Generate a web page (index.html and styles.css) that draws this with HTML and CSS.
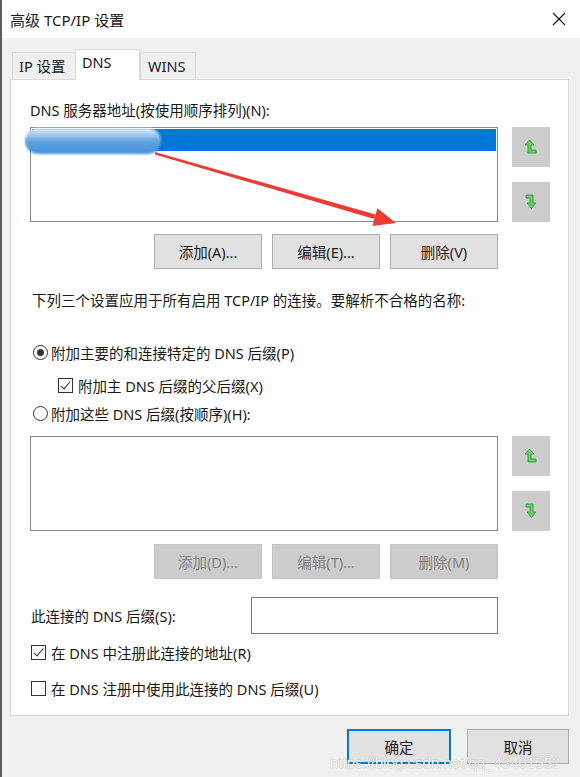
FILE: index.html
```html
<!DOCTYPE html>
<html lang="zh-CN">
<head>
  <meta charset="UTF-8" />
  <title>高级 TCP/IP 设置</title>
  <link rel="stylesheet" href="styles.css">
</head>
<body>
  <div class="window">
    <div class="titlebar">
      <span class="title">高级 TCP/IP 设置</span>
      <svg class="close" width="14" height="14" viewBox="0 0 14 14">
        <path d="M1 1 L13 13 M13 1 L1 13" stroke="#111" stroke-width="1.1" fill="none"/>
      </svg>
    </div>

    <div class="content">
      <div class="tabs">
        <div class="tab">IP 设置</div>
        <div class="tab active">DNS</div>
        <div class="tab">WINS</div>
      </div>

      <div class="panel">
        <div class="label first">DNS 服务器地址(按使用顺序排列)(N):</div>
        <div class="list-row">
          <div class="listbox">
            <div class="selected"></div>
            <div class="mosaic"></div>
          </div>
          <div class="side-btns">
            <div class="side-btn">
              <svg width="12" height="16" viewBox="0 0 12 16"><polygon points="4.5,1 9,6 6,6 6,11 11,11 11,14 3,14 3,6 0,6" fill="#5fd35f" stroke="#2f9a3a" stroke-width="0.8"/></svg>
            </div>
            <div class="side-btn">
              <svg width="12" height="16" viewBox="0 0 12 16"><polygon points="1,1 8,1 8,9 11,9 6.5,14.5 2,9 5,9 5,4 1,4" fill="#5fd35f" stroke="#2f9a3a" stroke-width="0.8"/></svg>
            </div>
          </div>
        </div>
        <div class="btn-row">
          <div class="btn">添加(A)...</div>
          <div class="btn">编辑(E)...</div>
          <div class="btn">删除(V)</div>
        </div>

        <div class="label note">下列三个设置应用于所有启用 TCP/IP 的连接。要解析不合格的名称:</div>

        <div class="option radio-row first-radio">
          <span class="radio checked"></span>附加主要的和连接特定的 DNS 后缀(P)
        </div>
        <div class="option sub-check">
          <span class="check on"></span>附加主 DNS 后缀的父后缀(X)
        </div>
        <div class="option radio-row second-radio">
          <span class="radio"></span>附加这些 DNS 后缀(按顺序)(H):
        </div>

        <div class="list-row list-two">
          <div class="listbox"></div>
          <div class="side-btns">
            <div class="side-btn">
              <svg width="12" height="16" viewBox="0 0 12 16"><polygon points="4.5,1 9,6 6,6 6,11 11,11 11,14 3,14 3,6 0,6" fill="#5fd35f" stroke="#2f9a3a" stroke-width="0.8"/></svg>
            </div>
            <div class="side-btn">
              <svg width="12" height="16" viewBox="0 0 12 16"><polygon points="1,1 8,1 8,9 11,9 6.5,14.5 2,9 5,9 5,4 1,4" fill="#5fd35f" stroke="#2f9a3a" stroke-width="0.8"/></svg>
            </div>
          </div>
        </div>
        <div class="btn-row">
          <div class="btn disabled">添加(D)...</div>
          <div class="btn disabled">编辑(T)...</div>
          <div class="btn disabled">删除(M)</div>
        </div>

        <div class="suffix-row">
          <span>此连接的 DNS 后缀(S):</span>
          <div class="textbox"></div>
        </div>

        <div class="option bottom-check one">
          <span class="check on"></span>在 DNS 中注册此连接的地址(R)
        </div>
        <div class="option bottom-check two">
          <span class="check"></span>在 DNS 注册中使用此连接的 DNS 后缀(U)
        </div>
      </div>

      <div class="footer">
        <div class="btn footer-btn default">确定</div>
        <div class="btn footer-btn">取消</div>
      </div>
    </div>

    <svg class="annotation" width="580" height="777" viewBox="0 0 580 777">
      <polygon points="155,152 155,154.5 374.3,219 375.5,214.6" fill="#ee3a33"/>
      <polygon points="396,223 372.4,226 377.4,208.2" fill="#ee3a33"/>
    </svg>
    <div class="watermark">https://blog.csdn.net/qq_43401552</div>
  </div>
</body>
</html>
```

FILE: styles.css
```css
body {
  margin: 0;
  padding: 0;
  background: #f0f0f0;
  font-family: "Noto Sans", "Noto Sans CJK SC", sans-serif;
  font-size: 14.5px;
  color: #1a1a1a;
}
.window {
  position: relative;
  width: 578px;
  height: 777px;
  border-left: 2px solid #5c5c5c;
  overflow: hidden;
}
.titlebar {
  height: 38px;
  background: white;
  display: flex;
  align-items: center;
  justify-content: space-between;
  padding: 0 14px 0 8px;
}
.title {
  font-size: 15px;
}
.content {
  padding: 11px 11px 0 8px;
}
.tabs {
  display: flex;
  align-items: flex-end;
  padding-left: 2px;
  height: 30px;
}
.tab {
  height: 26px;
  line-height: 26px;
  padding: 0 6px;
  border: 1px solid #d9d9d9;
  border-bottom: none;
  background: #f0f0f0;
  font-size: 14.5px;
}
.tab:first-child {
  width: 50px;
}
.tab:nth-child(3) {
  width: 42px;
  padding: 0 5px 0 7px;
}
.tab.active {
  background: white;
  height: 30px;
  line-height: 24px;
  width: 51px;
  position: relative;
  z-index: 1;
  margin-bottom: -1px;
  margin-left: -1px;
}
.panel {
  background: white;
  border: 1px solid #d9d9d9;
  height: 637px;
  padding-left: 19px;
  box-sizing: border-box;
}
.label {
  line-height: 20px;
}
.label.first {
  margin-top: 20px;
}
.list-row {
  display: flex;
  margin-top: 7px;
  gap: 14px;
}
.listbox {
  position: relative;
  width: 466px;
  height: 93px;
  border: 1px solid #828790;
  background: white;
}
.selected {
  margin: 1px 1px 0 1px;
  height: 22px;
  background: #0078d7;
}
.mosaic {
  position: absolute;
  left: -6px;
  top: 0;
  width: 136px;
  height: 26px;
  border-radius: 13px;
  background: linear-gradient(to bottom, #e6eef8 0%, #9cc3ea 30%, #5a9fe0 55%, #4893de 100%);
  filter: blur(1px);
}
.side-btns {
  display: flex;
  flex-direction: column;
  justify-content: space-between;
  height: 95px;
}
.side-btn {
  width: 38px;
  height: 40px;
  background: #cccccc;
  display: flex;
  align-items: center;
  justify-content: center;
}
.btn-row {
  display: flex;
  justify-content: flex-end;
  gap: 10px;
  width: 468px;
  margin-top: 12px;
}
.btn {
  width: 106px;
  height: 33px;
  border: 1px solid #adadad;
  background: #e1e1e1;
  display: flex;
  align-items: center;
  justify-content: center;
  font-size: 14.5px;
}
.btn.disabled {
  background: #cccccc;
  border-color: #c4c4c4;
  color: #838383;
}
.label.note {
  margin-top: 21px;
  margin-left: 2px;
}
.option {
  display: flex;
  align-items: center;
  height: 20px;
}
.first-radio {
  margin-top: 32px;
  margin-left: 3px;
}
.second-radio {
  margin-top: 8px;
  margin-left: 3px;
}
.sub-check {
  margin-top: 13px;
  margin-left: 28px;
}
.radio {
  width: 13px;
  height: 13px;
  border: 1px solid #333;
  border-radius: 50%;
  margin-right: 3px;
  position: relative;
  background: white;
}
.radio.checked::after {
  content: "";
  position: absolute;
  left: 3px;
  top: 3px;
  width: 7px;
  height: 7px;
  border-radius: 50%;
  background: #333;
}
.check {
  width: 13px;
  height: 13px;
  border: 1px solid #333;
  margin-right: 5px;
  position: relative;
  background: white;
}
.check.on::after {
  content: "";
  position: absolute;
  left: 4px;
  top: 0px;
  width: 4px;
  height: 9px;
  border-right: 1.3px solid #333;
  border-bottom: 1.3px solid #333;
  transform: rotate(40deg);
}
.list-two {
  margin-top: 13px;
}
.list-two + .btn-row {
  margin-top: 13px;
}
.suffix-row {
  display: flex;
  align-items: center;
  justify-content: space-between;
  width: 468px;
  margin-top: 18px;
  padding-left: 1px;
  box-sizing: border-box;
}
.textbox {
  width: 245px;
  height: 35px;
  border: 1px solid #7a7a7a;
  background: white;
}
.bottom-check {
  margin-left: 1px;
}
.bottom-check.one {
  margin-top: 8px;
}
.bottom-check.two {
  margin-top: 16px;
}
.footer {
  display: flex;
  justify-content: flex-end;
  gap: 16px;
  margin-top: 13px;
}
.footer-btn {
  width: 100px;
}
.footer-btn.default {
  width: 100px;
  height: 31px;
  border: 2px solid #0078d7;
}
.annotation {
  position: absolute;
  left: -2px;
  top: 0;
  pointer-events: none;
}
.watermark {
  position: absolute;
  left: 328px;
  top: 754px;
  font-family: "Liberation Sans", Arial, sans-serif;
  font-size: 15px;
  color: white;
  text-shadow: 0 0 1px #999, 0 0 1px #999;
  opacity: 0.85;
}
```
